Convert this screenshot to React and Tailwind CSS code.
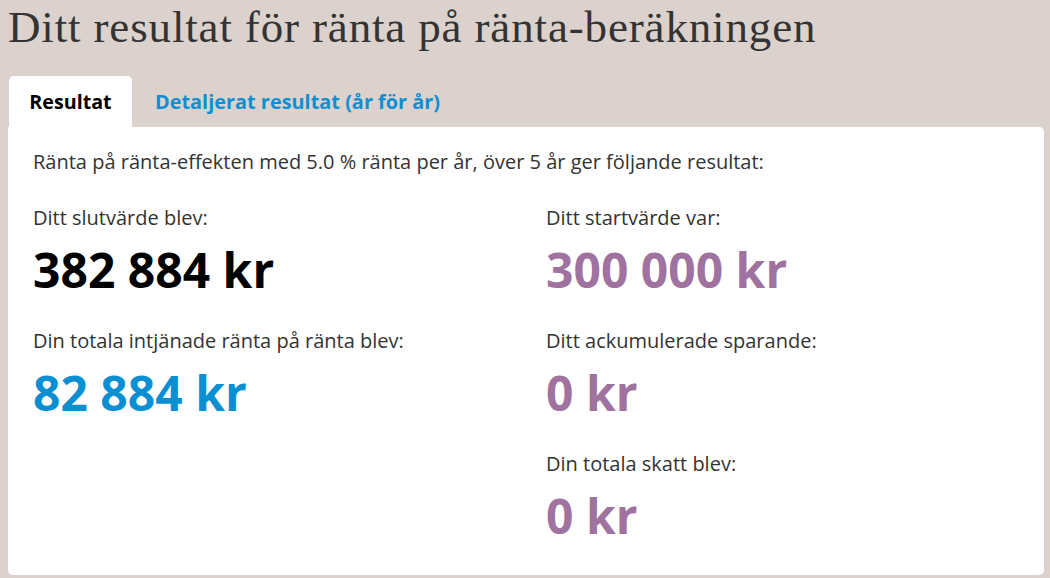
export default function App() {
  const sans = { fontFamily: '"Open Sans", "Noto Sans", sans-serif' };
  return (
    <div className="w-[1050px] h-[578px] bg-[#dbd2cd] overflow-hidden" style={sans}>
      <h1
        className="pl-[8px] pt-[1px] h-[76px] text-[45px] leading-[52px] text-[#333333] tracking-[0.85px]"
        style={{ fontFamily: '"Liberation Serif", serif' }}
      >
        Ditt resultat för ränta på ränta-beräkningen
      </h1>
      <div className="flex pl-[9px] h-[51px]">
        <div className="w-[123px] bg-white rounded-t-[5px] flex items-center justify-center text-[19.7px] font-bold text-black">
          Resultat
        </div>
        <div className="pl-[23px] flex items-center text-[19.9px] font-bold text-[#0e8fd3]">
          Detaljerat resultat (år för år)
        </div>
      </div>
      <div className="ml-[8px] w-[1036px] h-[448px] bg-white rounded-tr-[5px] rounded-b-[5px] pl-[25px] pt-[22px] text-[#333333]">
        <p className="text-[20px] leading-[26px]">
          Ränta på ränta-effekten med 5.0 % ränta per år, över 5 år ger följande resultat:
        </p>
        <div className="flex mt-[30px]">
          <div className="w-[513px] flex flex-col">
            <Item label="Ditt slutvärde blev:" value="382 884 kr" color="text-black" />
            <Item label="Din totala intjänade ränta på ränta blev:" value="82 884 kr" color="text-[#0a8fd3]" />
          </div>
          <div className="flex flex-col">
            <Item label="Ditt startvärde var:" value="300 000 kr" color="text-[#a0729f]" />
            <Item label="Ditt ackumulerade sparande:" value="0 kr" color="text-[#a0729f]" />
            <Item label="Din totala skatt blev:" value="0 kr" color="text-[#a0729f]" />
          </div>
        </div>
      </div>
    </div>
  );
}

function Item({ label, value, color }) {
  return (
    <div className="h-[123px]">
      <div className="text-[20px] leading-[26px] text-[#333333]">{label}</div>
      <div className={`text-[48px] leading-[66px] font-bold mt-[6px] ${color}`}>{value}</div>
    </div>
  );
}
